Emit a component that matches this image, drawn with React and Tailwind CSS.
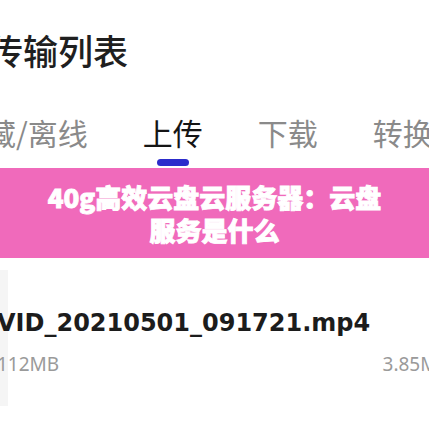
export default function App() {
  const tabs = [
    { label: "收藏/离线", active: false },
    { label: "上传", active: true },
    { label: "下载", active: false },
    { label: "转换", active: false },
  ];

  return (
    <div
      className="w-[429px] h-[429px] overflow-hidden bg-white relative"
      style={{ fontFamily: '"Noto Sans CJK SC", "Noto Sans", sans-serif' }}
    >
      {/* Header */}
      <div className="h-[100px] pt-[26px] -ml-[12px]">
        <h1 className="text-[35px] leading-[48px] font-medium text-[#1f1f1f] whitespace-nowrap">传输列表</h1>
      </div>

      {/* Tabs */}
      <div className="h-[68px] flex items-start gap-[55px] -ml-[44px] whitespace-nowrap">
        {tabs.map((t) => (
          <div key={t.label} className="flex flex-col items-center">
            <span
              className={`text-[30px] leading-[64px] ${t.active ? "text-[#151515]" : "text-[#8a8a8a]"}`}
            >
              {t.label}
            </span>
            {t.active && <div className="w-[32px] h-[7px] rounded-full bg-[#2c2ccb] -mt-[5px]" />}
          </div>
        ))}
      </div>

      {/* Banner */}
      <div className="h-[90px] bg-[#f06abb] flex items-center justify-center">
        <p className="text-white font-black text-[26px] leading-[33px] text-center w-[340px] [-webkit-text-stroke:0.9px_white]">
          40g高效云盘云服务器：云盘服务是什么
        </p>
      </div>

      {/* File row */}
      <div className="flex mt-[12px]">
        <div className="w-[8px] h-[136px] bg-[#f5f5f5]" />
        <div className="flex-1 -ml-[11px] pt-[38px]">
          <p
            className="text-[24px] font-bold text-[#1c1c1c] leading-[30px] whitespace-nowrap"
            style={{ fontFamily: '"DejaVu Sans", sans-serif' }}
          >
            VID_20210501_091721.mp4
          </p>
          <div
            className="flex justify-between mt-[14px] text-[19px] text-[#9a9a9a] leading-[24px] whitespace-nowrap -mr-[37px]"
            style={{ fontFamily: '"Noto Sans", sans-serif' }}
          >
            <span>112MB</span>
            <span>3.85MB/s</span>
          </div>
        </div>
      </div>
    </div>
  );
}
